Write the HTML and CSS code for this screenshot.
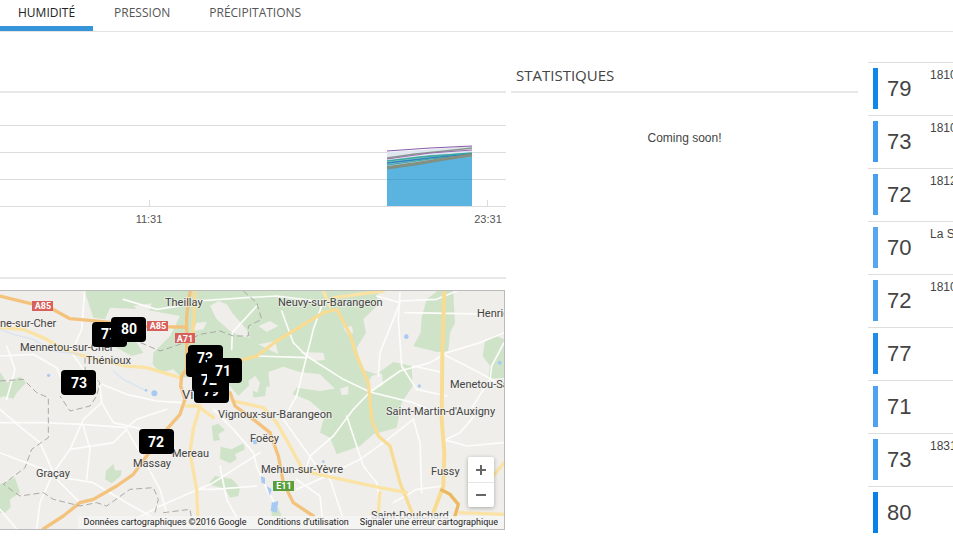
FILE: index.html
```
<!DOCTYPE html>
<html lang="fr">
  <head>
    <meta charset="UTF-8" />
    <meta name="viewport" content="width=device-width, initial-scale=1.0" />
    <title>Humidité</title>
    <link rel="stylesheet" href="styles.css">
  </head>
  <body>
    <nav class="tabs">
      <a class="tab active" href="#humidite">HUMIDITÉ</a>
      <a class="tab" href="#pression">PRESSION</a>
      <a class="tab" href="#precipitations">PRÉCIPITATIONS</a>
    </nav>

    <main class="dashboard">
      <div class="charts">
        <section class="panel">
          <div class="panel-heading"></div>
          <svg class="chart">
            <g class="grid-lines">
              <line x1="0" y1="32.5" x2="100%" y2="32.5" />
              <line x1="0" y1="59.5" x2="100%" y2="59.5" />
              <line x1="0" y1="86.5" x2="100%" y2="86.5" />
            </g>
            <path fill="#5ab4df" d="M387 75 L415 70 L445 65 L472 62 V113 H387 Z" />
            <path fill="#dfe6f0" d="M387 59 L420 57 L445 55 L472 53 V62 L430 67 L387 74 Z" />
            <path fill="#8fc4d4" d="M387 69 L430 62 L472 60 V64 L430 68 L387 76 Z" />
            <g fill="none" stroke-width="1">
              <path stroke="#8a5ba8" d="M387 58 L430 55 L472 53" />
              <path stroke="#8c9a8c" stroke-width="1.5" d="M387 65 L415 61 L445 58 L472 55" />
              <path stroke="#9a6db0" d="M387 66 L430 60 L472 57" />
              <path stroke="#3aa89a" stroke-width="1.5" d="M387 68 L420 64 L472 60" />
              <path stroke="#2c83c0" stroke-width="1.5" d="M387 70 L430 65 L472 61" />
              <path stroke="#49a5a0" d="M387 72 L430 66 L472 62" />
              <path stroke="#7e8f86" stroke-width="3" d="M387 75 L415 71 L445 66 L472 62" />
              <path stroke="#8f8f78" d="M387 74 L430 68 L472 61" />
            </g>
            <g class="grid-lines over">
              <line x1="387" y1="86.5" x2="472" y2="86.5" />
            </g>
            <g class="axis">
              <line x1="0" y1="113.5" x2="100%" y2="113.5" />
              <line x1="149.5" y1="107" x2="149.5" y2="113" />
              <line x1="487.5" y1="107" x2="487.5" y2="113" />
              <text x="149" y="130">11:31</text>
              <text x="488" y="130">23:31</text>
            </g>
          </svg>
        </section>

        <section class="panel">
          <div class="panel-heading map-heading"></div>
          <div class="map">
            <svg class="map-canvas">
              <!-- terrain and roads -->
              <svg width="504" height="238" viewBox="0 15 1512 714" fill="none" stroke-linejoin="round" stroke-linecap="round">
                <rect y="15" width="1512" height="714" fill="#efeeea" />
                <g fill="#cfe3c8">
                  <path d="M254 15 H1135 L1130 60 L1090 100 L1098 140 L1070 185 L1085 250 L1130 265 L1180 228 L1235 240 L1238 300 L1205 350 L1190 425 L1120 445 L1080 480 L1010 505 L990 455 L960 440 L975 385 L930 345 L880 325 L800 300 L795 330 L760 335 L755 290 L715 330 L690 300 L600 270 L545 275 L520 250 L480 260 L458 235 L460 200 L480 180 L510 150 L540 90 L430 70 L330 65 L315 100 L280 95 Z" />
                  <path d="M1312 15 H1360 L1362 60 L1365 110 L1350 140 L1345 195 L1320 200 L1240 180 L1262 140 L1265 95 L1280 40 Z" />
                  <path d="M1455 165 L1485 148 L1512 160 V275 L1465 278 L1470 240 L1448 210 Z" />
                  <path d="M0 258 L20 290 L60 272 L78 290 L50 320 L40 338 L10 330 L0 335 Z" />
                  <path d="M0 595 L45 575 L60 620 L30 640 L32 665 L15 680 L0 680 Z" />
                  <path d="M318 555 L340 534 L345 553 L365 553 L362 570 L335 592 L315 580 Z" />
                  <path d="M635 420 L655 413 L675 432 L655 445 L660 462 L640 465 Z" />
                  <path d="M662 482 L695 490 L730 472 L735 490 L705 505 L710 520 L690 532 L660 518 Z" />
                  <path d="M645 570 L695 578 L720 605 L715 630 L690 635 L675 608 L625 595 Z" />
                  <path d="M815 660 L835 665 L845 690 L815 690 Z" />
                  <path d="M350 155 L410 170 L430 200 L395 210 L350 185 Z" />
                </g>
                <g fill="#efeeea">
                  <path d="M400 60 L455 52 L450 70 L420 78 Z" />
                  <path d="M630 60 L655 45 L680 55 L700 85 L740 130 L750 155 L720 150 L690 135 L650 100 Z" />
                  <path d="M590 110 L620 108 L610 130 L580 135 Z" />
                  <path d="M775 120 L810 105 L835 120 L800 138 Z" />
                  <path d="M775 175 L825 165 L835 205 L805 190 Z" />
                  <path d="M900 198 L970 200 L975 222 L940 225 Z" />
                  <path d="M805 258 L850 242 L900 258 L960 265 L1005 308 L960 315 L890 305 L870 335 L810 310 Z" />
                  <path d="M745 285 L765 270 L780 290 L772 320 L750 310 Z" />
                  <path d="M1020 308 L1045 300 L1045 325 L1025 328 Z" />
                  <path d="M1115 270 L1145 262 L1150 295 L1115 318 L1100 300 Z" />
                  <path d="M1030 125 L1055 120 L1060 140 L1045 148 Z" />
                </g>
                <g stroke="#fcfcfa" stroke-width="5">
                  <path d="M254 15 L245 130 L215 200 L250 250 L305 295 L380 325 L470 345 L545 350" />
                  <path d="M590 45 L740 35 L830 30 L950 45 L975 60" />
                  <path d="M965 60 L940 130 L920 210 L890 330 L850 400" />
                  <path d="M845 75 L880 170 L920 210 L1030 280 L1110 318" />
                  <path d="M695 190 L697 140 L770 60 M770 210 L920 215" />
                  <path d="M370 40 L470 70 L540 60" />
                  <path d="M1200 20 L1195 100 L1205 240 L1250 310 L1340 330" />
                  <path d="M1110 318 L1200 255 L1290 230 L1340 200 L1440 170 L1512 140" />
                  <path d="M1135 270 L1140 200 L1180 100 L1200 50 L1130 30 M1200 45 L1310 40 L1370 15" />
                  <path d="M1215 80 L1512 85 M1512 170 L1475 240 L1470 280 L1400 390" />
                  <path d="M1320 200 L1400 240 L1512 300 M1240 240 L1330 260" />
                  <path d="M1110 318 L1240 350 L1330 390 M1240 400 L1150 470 L1080 520 L980 570 L890 610" />
                  <path d="M1240 400 L1260 470 L1265 620 M1340 460 L1380 440 L1440 370" />
                  <path d="M1110 318 L1060 370 L1000 450 L930 510 L915 560" />
                  <path d="M1330 460 L1400 480 L1512 470 M1330 600 L1250 610 L1180 650" />
                  <path d="M1040 390 L1090 540 L1130 590 L1140 650" />
                  <path d="M640 370 L700 430 L760 500 L770 540 L800 610 L830 660" />
                  <path d="M780 500 L640 590 L480 660 L350 729 M770 600 L640 610 L590 610" />
                  <path d="M0 370 L70 430 L120 470 L160 560 L210 490 L250 400 L305 350 L300 300" />
                  <path d="M0 500 L50 520 L160 560 L120 650 L110 729 M160 570 L280 590 L380 650 L450 690" />
                  <path d="M0 210 L100 205 L170 245 L190 290 M20 180 L45 250 L20 340" />
                  <path d="M0 410 L130 410 L245 415 L380 425 L410 400 L500 370 M305 350 L340 410 L430 430" />
                  <path d="M380 430 L340 470 L210 490 M250 420 L270 490 L260 580 M380 430 L420 500 L480 610 L500 680" />
                  <path d="M160 570 L210 620 L240 650 M0 670 L50 729 M660 540 L680 640 L730 729" />
                  <path d="M850 400 L950 540 L990 580 L1040 729 M890 580 L960 630 L970 729" />
                </g>
                <g stroke="#fae3a5" stroke-width="10">
                  <path d="M0 125 L70 130 L140 160 L200 195 L290 220 L380 240 L440 245 L540 275" />
                  <path d="M585 15 L583 90 L575 170 M725 222 L770 210 L830 165 L970 80 L1010 70 L1050 145 L1070 210 L1105 290 L1115 400 L1135 450 L1170 480 L1200 590 L1240 690" stroke="#f8dc94" />
                  <path d="M970 15 L990 60 M1000 35 L1150 15" />
                  <path d="M1333 15 L1327 200 L1325 400 L1333 500 L1330 600 L1300 680" stroke="#f8dc94" stroke-width="12" />
                  <path d="M700 345 L790 365 L830 410 L870 480 L910 555 L1000 575 L1140 605 L1220 620" />
                  <path d="M560 360 L600 360 L580 430 L570 500 L590 610 L595 729" />
                  <path d="M600 365 L640 395 M1140 620 L1135 680 M1380 680 L1512 685 M1512 530 L1480 570" />
                </g>
                <g stroke="#f3c27c" stroke-width="10">
                  <path d="M0 30 L80 50 L150 65 L210 98 L300 106 L440 122 L555 123" />
                  <path d="M570 15 L560 90 L560 250 L545 270 L542 300 L555 340 L540 385 L500 430 L440 510 L400 565 L350 600 L280 640 L240 650 L190 690 L130 729" />
                  <path d="M690 320 L705 360 L760 400 L810 440 L835 510 L850 590 L880 650 L940 690" />
                  <path d="M1325 612 L1350 625 L1375 655 L1365 690" stroke="#edb960" />
                </g>
                <g stroke="#aaa9a6" stroke-width="3" stroke-dasharray="18 10" stroke-linecap="butt">
                  <path d="M730 15 L770 50 L785 100 L745 120 L745 150 L700 150 L660 135 L600 145 L540 175 L480 195 L410 165" />
                  <path d="M0 285 L70 280 L110 320 L145 335 L145 455 L95 490 L75 545 L10 595 L60 630 L130 620 L160 640 L240 660 L290 650 L320 660 L390 610 L460 605 L475 640 L465 680" />
                  <path d="M255 215 L255 250 L300 290 L290 330 L270 360 L210 375 L180 330 M490 680 L570 670 L575 700" />
                </g>
                <g fill="#a9c9f5">
                  <circle cx="463" cy="322" r="9" /><circle cx="438" cy="313" r="4" />
                  <circle cx="146" cy="268" r="5" /><circle cx="1219" cy="152" r="7" />
                  <circle cx="1499" cy="230" r="6" /><circle cx="1258" cy="300" r="5" />
                  <circle cx="765" cy="468" r="7" /><circle cx="970" cy="527" r="4" />
                  <path d="M782 570 L795 575 L795 595 L785 590 Z M800 600 L815 610 L810 630 Z M815 650 L835 645 L830 680 L812 675 Z" />
                </g>
                <path stroke="#d9e4f2" stroke-width="4" d="M0 130 L40 145 L100 160 L160 195 L240 205 M340 255 L370 280 L430 310" />
              </svg>

              <g class="road-sign">
                <rect x="32" y="10" width="21" height="10" /><text x="43" y="18">A85</text>
                <rect x="147" y="30" width="21" height="10" /><text x="158" y="38">A85</text>
                <rect x="175" y="42" width="20" height="10" /><text x="185" y="51">A71</text>
                <rect class="euro" x="273" y="190" width="21" height="10" /><text x="284" y="198">E11</text>
              </g>

              <g class="town">
                <text x="165" y="15">Theillay</text>
                <text x="278" y="15">Neuvy-sur-Barangeon</text>
                <text x="477" y="26">Henrichemont</text>
                <text x="0" y="36">ne-sur-Cher</text>
                <text x="20" y="60">Mennetou-sur-Cher</text>
                <text x="86" y="73">Thénioux</text>
                <text x="450" y="97">Menetou-Salon</text>
                <text class="city" x="182" y="108">Vierzon</text>
                <text x="386" y="124">Saint-Martin-d'Auxigny</text>
                <text x="218" y="127">Vignoux-sur-Barangeon</text>
                <text x="250" y="151">Foëcy</text>
                <text x="172" y="166">Mereau</text>
                <text x="133" y="176">Massay</text>
                <text x="36" y="186">Graçay</text>
                <text x="261" y="182">Mehun-sur-Yèvre</text>
                <text x="431" y="184">Fussy</text>
                <text x="371" y="228">Saint-Doulchard</text>
              </g>

              <g class="marker">
                <rect x="92" y="31" width="35" height="25" rx="4" /><text x="109" y="48">77</text>
                <rect x="111" y="26" width="35" height="25" rx="4" /><text x="129" y="43">80</text>
                <rect x="61" y="79" width="35" height="25" rx="4" /><text x="79" y="97">73</text>
                <rect x="139" y="138" width="35" height="25" rx="4" /><text x="156" y="156">72</text>
                <rect x="186" y="61" width="35" height="25" rx="4" />
                <rect x="194" y="87" width="35" height="25" rx="4" /><text x="211" y="105">79</text>
                <rect x="192" y="76" width="35" height="25" rx="4" /><text x="209" y="94">72</text>
                <rect x="188" y="54" width="35" height="25" rx="4" /><text x="205" y="72">73</text>
                <rect x="207" y="67" width="35" height="25" rx="4" /><text x="223" y="85">71</text>
              </g>
            </svg>

            <div class="zoom-control">
              <button type="button" aria-label="Zoom avant">
                <svg width="10" height="10"><path d="M4 0 H6 V4 H10 V6 H6 V10 H4 V6 H0 V4 H4 Z" /></svg>
              </button>
              <button type="button" aria-label="Zoom arrière">
                <svg width="10" height="10"><path d="M0 4 H10 V6 H0 Z" /></svg>
              </button>
            </div>

            <div class="map-credits">
              <span>Données cartographiques ©2016 Google</span>
              <a href="#conditions">Conditions d'utilisation</a>
              <a href="#signaler">Signaler une erreur cartographique</a>
            </div>
          </div>
        </section>
      </div>

      <section class="panel">
        <h2 class="panel-heading">STATISTIQUES</h2>
        <p class="soon">Coming soon!</p>
      </section>

      <ul class="stations">
        <li class="station level-79"><strong>79</strong><span>1810</span></li>
        <li class="station level-73"><strong>73</strong><span>1810</span></li>
        <li class="station level-72"><strong>72</strong><span>1812</span></li>
        <li class="station level-70"><strong>70</strong><span>La S</span></li>
        <li class="station level-72"><strong>72</strong><span>1810</span></li>
        <li class="station level-77"><strong>77</strong></li>
        <li class="station level-71"><strong>71</strong></li>
        <li class="station level-73"><strong>73</strong><span>1831</span></li>
        <li class="station level-80"><strong>80</strong></li>
      </ul>
    </main>
  </body>
</html>
```
FILE: styles.css
```
* {
  margin: 0;
  padding: 0;
  box-sizing: border-box;
}

body {
  background: #fff;
  color: #444;
  font-family: "Liberation Sans", Arial, sans-serif;
  font-size: 12px;
  overflow: hidden;
}

/* Tabs */
.tabs {
  display: flex;
  gap: 3px;
  height: 32px;
  border-bottom: 1px solid #e4e4e4;
}

.tab {
  padding: 4px 18px 0;
  height: 31px;
  color: #555;
  font-family: "Open Sans", sans-serif;
  line-height: 18px;
  text-decoration: none;
}

.tab.active {
  color: #222;
  border-bottom: 5px solid #3695d8;
}

/* Columns */
.dashboard {
  display: grid;
  grid-template-columns: minmax(0, 506fr) minmax(0, 347fr) minmax(0, 90fr);
  column-gap: 5px;
}

.panel-heading {
  height: 61px;
  padding: 33px 5px 0;
  border-bottom: 2px solid #e8e8e8;
  font-family: "Open Sans", sans-serif;
  font-size: 15px;
  font-weight: 400;
  line-height: 20px;
}

.map-heading {
  height: 46px;
  margin-bottom: 11px;
}

.soon {
  padding-top: 36px;
  line-height: 18px;
  text-align: center;
}

/* Humidity chart */
.chart {
  display: block;
  width: 100%;
  height: 140px;
}

.grid-lines line,
.axis line {
  stroke: #dcdcdc;
}

.grid-lines.over line {
  stroke: #4a9cc4;
  stroke-opacity: 0.6;
}

.axis text {
  fill: #555;
  font-size: 11px;
  text-anchor: middle;
}

/* Map */
.map {
  position: relative;
  margin-right: 1px;
  border: 1px solid #bbb;
  border-left: none;
  overflow: hidden;
}

.map-canvas {
  display: block;
  width: 100%;
  height: 238px;
  background: #efeeea;
  font-family: Roboto, sans-serif;
}

.town text {
  fill: #444;
  font-size: 11px;
  stroke: #f4f3f0;
  stroke-width: 2px;
  stroke-opacity: 0.6;
  paint-order: stroke;
}

.town .city {
  font-size: 13px;
}

.road-sign rect {
  fill: #d8605c;
}

.road-sign .euro {
  fill: #5a9e3e;
}

.road-sign text {
  fill: #fff;
  font-size: 9px;
  font-weight: 700;
  text-anchor: middle;
}

.marker text {
  fill: #fff;
  font-size: 14px;
  font-weight: 700;
  text-anchor: middle;
}

.zoom-control {
  position: absolute;
  right: 10px;
  bottom: 22px;
  width: 26px;
  background: #fff;
  border-radius: 2px;
  box-shadow: 0 1px 4px rgba(0, 0, 0, 0.3);
}

.zoom-control button {
  display: flex;
  align-items: center;
  justify-content: center;
  width: 100%;
  height: 25px;
  background: none;
  border: none;
  cursor: pointer;
}

.zoom-control button + button {
  border-top: 1px solid #e6e6e6;
}

.zoom-control path {
  fill: #666;
}

.map-credits {
  position: absolute;
  right: 0;
  bottom: 0;
  display: flex;
  gap: 11px;
  padding: 0 6px;
  background: rgba(245, 245, 245, 0.8);
  color: #222;
  font-family: Roboto, sans-serif;
  font-size: 9px;
  line-height: 13px;
  white-space: nowrap;
}

.map-credits a {
  color: #222;
  text-decoration: none;
}

/* Station list */
.stations {
  margin: 30px 0 0 5px;
  list-style: none;
}

.station {
  display: flex;
  height: 53px;
  padding: 5px 0 6px 5px;
  border-top: 1px solid #dedede;
  overflow: hidden;
  white-space: nowrap;
}

.station::before {
  content: "";
  flex: none;
  width: 5px;
  height: 41px;
  background: #4a9ff0;
}

.station strong {
  flex: none;
  width: 52px;
  padding-left: 9px;
  font-size: 22px;
  font-weight: 400;
  line-height: 41px;
}

.station span {
  line-height: 14px;
}

.level-80::before {
  background: #0a80e8;
}

.level-79::before {
  background: #1086ea;
}

.level-77::before {
  background: #1e8ce8;
}

.level-73::before {
  background: #409aee;
}

.level-71::before {
  background: #50a2f0;
}

.level-70::before {
  background: #58a6f0;
}
```
